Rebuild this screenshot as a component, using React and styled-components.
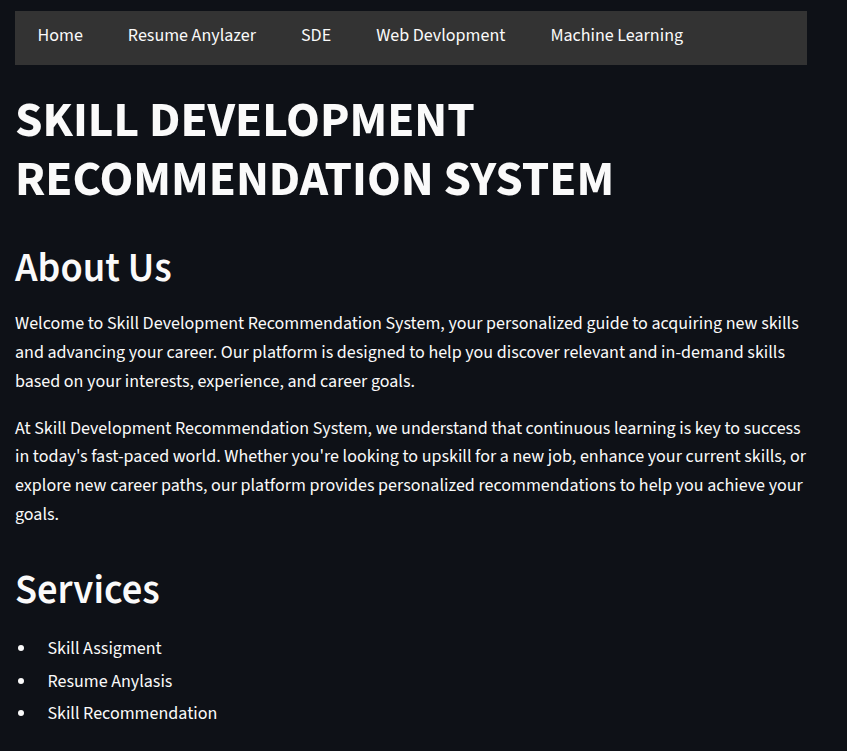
import React from "react";
import styled, { createGlobalStyle } from "styled-components";

const GlobalStyle = createGlobalStyle`
  html, body {
    margin: 0;
    padding: 0;
    background: #0e1117;
  }
  body {
    font-family: "Source Sans 3", "Source Sans Pro", Lato, sans-serif;
    color: #fafafa;
    font-size: 18px;
    line-height: 1.6;
  }
  * { box-sizing: border-box; }
`;

const Page = styled.main`
  min-height: 751px;
  padding: 11px 40px 24px 15px;
  display: flex;
  flex-direction: column;
`;

const NavBar = styled.nav`
  display: flex;
  align-items: flex-start;
  height: 54px;
  background: #333333;
  padding: 0;
`;

const NavItem = styled.a`
  padding: 0 22.5px;
  color: #fafafa;
  font-size: 18px;
  line-height: 50px;
  text-decoration: none;
  cursor: pointer;
  white-space: nowrap;
`;

const Title = styled.h1`
  margin: 0;
  padding: 25.5px 0 18px;
  font-size: 49.5px;
  font-weight: 700;
  line-height: 1.2;
  color: #fafafa;
`;

const Heading = styled.h2`
  margin: 0;
  padding: ${(p) => p.$top || "18px"} 0 16.4px;
  font-size: 40.5px;
  font-weight: 600;
  line-height: 1.2;
  color: #fafafa;
`;

const Paragraph = styled.p`
  margin: 0 0 18px;
  font-size: 18px;
  line-height: 28.8px;
`;

const List = styled.ul`
  margin: 0;
  padding: 0;
  list-style: disc outside;
`;

const ListItem = styled.li`
  margin: 3.6px 0 3.6px 21.6px;
  padding-left: 10.8px;
  font-size: 18px;
  line-height: 28.8px;
`;

const navItems = ["Home", "Resume Anylazer", "SDE", "Web Devlopment", "Machine Learning"];
const services = ["Skill Assigment", "Resume Anylasis", "Skill Recommendation"];

export default function App() {
  return (
    <>
      <GlobalStyle />
      <Page>
        <NavBar>
          {navItems.map((n) => (
            <NavItem key={n}>{n}</NavItem>
          ))}
        </NavBar>
        <Title>
          SKILL DEVELOPMENT
          <br />
          RECOMMENDATION SYSTEM
        </Title>
        <Heading>About Us</Heading>
        <Paragraph>
          Welcome to Skill Development Recommendation System, your personalized guide to acquiring new skills
          and advancing your career. Our platform is designed to help you discover relevant and in-demand skills
          based on your interests, experience, and career goals.
        </Paragraph>
        <Paragraph>
          At Skill Development Recommendation System, we understand that continuous learning is key to success
          in today's fast-paced world. Whether you're looking to upskill for a new job, enhance your current
          skills, or explore new career paths, our platform provides personalized recommendations to help you
          achieve your goals.
        </Paragraph>
        <Heading $top="19px">Services</Heading>
        <List>
          {services.map((s) => (
            <ListItem key={s}>{s}</ListItem>
          ))}
        </List>
      </Page>
    </>
  );
}
